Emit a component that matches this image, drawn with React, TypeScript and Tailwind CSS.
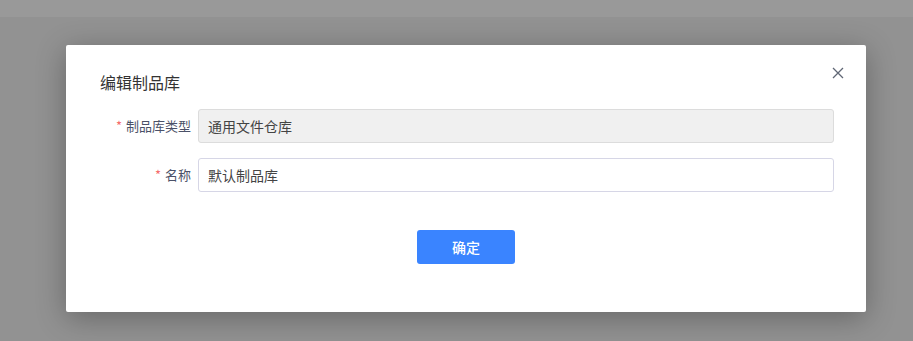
const FONT = "font-['Noto_Sans_CJK_SC','Noto_Sans',sans-serif]";

function CloseIcon() {
  return (
    <svg width="12" height="12" viewBox="0 0 12 12" fill="none" stroke="currentColor" strokeWidth="1.3" aria-hidden="true">
      <path d="M1 1l10 10M11 1L1 11" />
    </svg>
  );
}

function Field({ label, value, disabled }: { label: string; value: string; disabled?: boolean }) {
  return (
    <div className="flex items-center">
      <label className="flex w-[125px] shrink-0 items-center justify-end pr-[7px] text-[13px] text-[#4b5168]">
        <span className="mr-1 text-[#f56c6c]">*</span>
        {label}
      </label>
      <div
        className={`flex h-[34px] flex-1 items-center rounded-[3px] border px-[9px] text-[14px] text-[#444] ${
          disabled ? "border-[#dcdcdc] bg-[#f0f0f0]" : "border-[#d6d6e6] bg-white"
        }`}
      >
        {value}
      </div>
    </div>
  );
}

export default function App() {
  return (
    <div className={`relative h-[341px] w-[913px] overflow-hidden bg-[#929292] ${FONT}`}>
      <div className="h-[17px] bg-[#999999]" />
      <div className="pl-[66px] pt-[28px]">
        <div className="relative h-[267px] w-[800px] rounded-[2px] bg-white shadow-[0_6px_30px_rgba(0,0,0,0.3)]">
          <button type="button" aria-label="关闭" className="absolute right-[22px] top-[22px] text-[#606775]">
            <CloseIcon />
          </button>
          <div className="px-[34px] pt-[26px]">
            <h2 className="text-[16px] font-normal leading-[22px] text-[#333]">编辑制品库</h2>
          </div>
          <div className="mt-[16px] flex flex-col gap-[15px] pl-[7px] pr-[32px]">
            <Field label="制品库类型" value="通用文件仓库" disabled />
            <Field label="名称" value="默认制品库" />
          </div>
          <div className="mt-[38px] flex justify-center">
            <button
              type="button"
              className="h-[34px] w-[98px] rounded-[3px] bg-[#3a84ff] text-[14px] font-medium text-white"
            >
              确定
            </button>
          </div>
        </div>
      </div>
    </div>
  );
}
